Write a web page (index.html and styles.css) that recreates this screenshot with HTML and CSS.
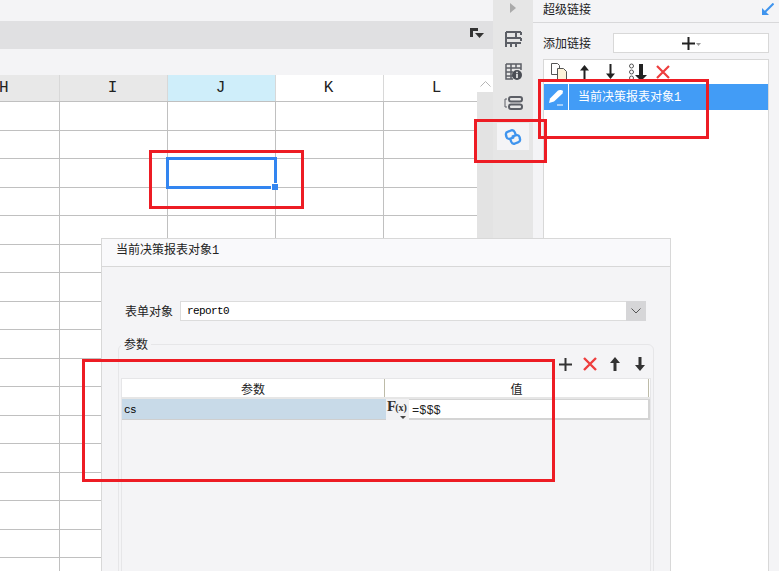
FILE: index.html
```html
<!DOCTYPE html>
<html lang="zh">
<head>
<meta charset="utf-8">
<title>超级链接</title>
<link rel="stylesheet" href="styles.css">
</head>
<body>
<div class="app">
  <div class="main">
    <div class="strip"></div>
    <div class="toolbar">
      <svg class="tb-icon" width="14" height="12" viewBox="0 0 14 12"><path d="M0 0h8v3H3v6H0z" fill="#333"/><path d="M5 5h9l-4.500 5z" fill="#333"/></svg>
    </div>
    <div class="strip2"></div>
    <div class="sheet">
      <div class="grid-wrap">
        <div class="head">
          <div class="hc hc-h"><span class="hl">H</span></div>
          <div class="hc hc-g">I</div>
          <div class="hc hc-sel">J</div>
          <div class="hc">K</div>
          <div class="hc">L</div>
        </div>
        <div class="rows" id="rows"></div>
      </div>
      <div class="vbar"><div class="vbtn"><svg width="11" height="6" viewBox="0 0 11 6"><path d="M.5 5.500l5-5 5 5" fill="none" stroke="#b5b5b5"/></svg></div></div>
    </div>
  </div>
  <div class="rail">
    <svg class="rail-tri" width="6" height="10" viewBox="0 0 6 10"><path d="M0 0l6 5-6 5z" fill="#aaa"/></svg>
    <svg class="ri ri1" width="17" height="17" viewBox="0 0 17 17"><path d="M1 1h15M1 1v15M1 7h15M1 12h15M16 1v3M16 7v3M6 12v4M11 12v4M11 1v6" fill="none" stroke="#5c5f66" stroke-width="2"/></svg>
    <svg class="ri ri2" width="17" height="17" viewBox="0 0 17 17"><path d="M1 1h15v6M1 1v15h7M1 5h15M1 9h7M1 13h7M6 1v15M11 1v4" fill="none" stroke="#5c5f66" stroke-width="1.500"/><circle cx="12" cy="12" r="5" fill="#4b4e55"/><path d="M12 8.800v1.400M12 11v4" stroke="#fff" stroke-width="1.500"/></svg>
    <svg class="ri ri3" width="19" height="14" viewBox="0 0 19 14"><path d="M3 3H1v8h2" fill="none" stroke="#5c5f66"/><rect x="5" y="1" width="13" height="4.500" rx="2" fill="none" stroke="#5c5f66" stroke-width="2"/><rect x="5" y="8.500" width="13" height="4.500" rx="2" fill="none" stroke="#5c5f66" stroke-width="2"/></svg>
    <div class="rail-on">
      <svg width="18" height="18" viewBox="0 0 18 18"><g fill="none" stroke="#3f94ee" stroke-width="2.300" stroke-linecap="round" transform="rotate(15 9 9)"><path d="M9.500 9.500 6.200 11.600a2.800 2.800 0 0 1-3.600-1L1.900 9.200"/><path d="M1.900 9.200a3 3 0 0 1 .9-4.100L5.400 3.200a3 3 0 0 1 4 .7l1.200 1.600"/><path d="M8.500 8.500l3.300-2.100a2.800 2.800 0 0 1 3.600 1l.7 1.400"/><path d="M16.100 8.800a3 3 0 0 1-.9 4.100l-2.600 1.900a3 3 0 0 1-4-.7l-1.200-1.600"/></g></svg>
    </div>
  </div>
  <div class="panel">
    <div class="p-title">
      <span>超级链接</span>
      <svg width="12" height="12" viewBox="0 0 12 12"><path d="M11.500.5 3 9" stroke="#3f94ee" stroke-width="2"/><path d="M0 5v7h7z" fill="#3f94ee"/></svg>
    </div>
    <div class="p-add">
      <span class="p-add-l">添加链接</span>
      <div class="p-add-btn">
        <svg width="13" height="13" viewBox="0 0 13 13"><path d="M0 6.500h13M6.500 0v13" stroke="#222" stroke-width="2"/></svg>
        <svg class="caret" width="5" height="3" viewBox="0 0 5 3"><path d="M0 0h5L2.500 3z" fill="#999"/></svg>
      </div>
    </div>
    <div class="p-list">
      <div class="p-tools">
        <svg width="17" height="17" viewBox="0 0 17 17"><path d="M.5.500h6l2 2v9h-8z" fill="#fff" stroke="#555"/><path d="M6.500 5.500h6l3 3v8h-9z" fill="#fdf3d8" stroke="#555"/></svg>
        <svg width="11" height="16" viewBox="0 0 11 16"><path d="M5.500 1 10 6.500H6.500V16h-2V6.500H1z" fill="#222"/></svg>
        <svg width="11" height="16" viewBox="0 0 11 16"><path d="M5.500 15 10 9.500H6.500V0h-2v9.500H1z" fill="#222"/></svg>
        <svg width="18" height="18" viewBox="0 0 18 18"><circle cx="2.500" cy="3" r="2" fill="none" stroke="#555"/><circle cx="2.500" cy="9" r="2" fill="none" stroke="#555"/><circle cx="2.500" cy="15" r="2" fill="none" stroke="#555"/><path d="M12 18l6-6h-4V1h-4v11H6z" fill="#222"/></svg>
        <svg width="14" height="14" viewBox="0 0 14 14"><path d="M1 1l12 12M13 1 1 13" stroke="#ee3e3e" stroke-width="2.200"/></svg>
      </div>
      <div class="p-item">
        <div class="p-pen"><svg width="17" height="17" viewBox="0 0 17 17"><path d="M1 14l1-4.500L10 1.500c1.500-1 4-.5 5 .5l-.5 2.500L6 12.500z" fill="#fff"/><path d="M9 16h6" stroke="#fff"/></svg></div>
        <span class="p-name">当前决策报表对象1</span>
      </div>
    </div>
  </div>

  <div class="selection"><i class="sel-handle"></i></div>

  <div class="dialog">
    <div class="d-title">当前决策报表对象1</div>
    <div class="d-body">
      <div class="d-form">
        <span class="d-label">表单对象</span>
        <div class="d-select">
          <span class="d-val">report0</span>
          <div class="d-arrow"><svg width="10" height="6" viewBox="0 0 10 6"><path d="M.5.500 5 5 9.500.5" fill="none" stroke="#555"/></svg></div>
        </div>
      </div>
      <div class="d-group">
        <span class="d-legend">参数</span>
        <div class="d-tools">
          <svg width="13" height="13" viewBox="0 0 13 13"><path d="M0 6.500h13M6.500 0v13" stroke="#333" stroke-width="2"/></svg>
          <svg width="14" height="14" viewBox="0 0 14 14"><path d="M1 1l12 12M13 1 1 13" stroke="#ee3e3e" stroke-width="2.400"/></svg>
          <svg width="10" height="14" viewBox="0 0 10 14"><path d="M5 0l5 6H6.500v8h-3V6H0z" fill="#333"/></svg>
          <svg width="10" height="14" viewBox="0 0 10 14"><path d="M5 14l5-6H6.500V0h-3v8H0z" fill="#333"/></svg>
        </div>
        <div class="d-table">
          <div class="t-head">
            <div class="th th-a"><span class="th-t">参数</span></div>
            <div class="th th-b"><span class="th-t">值</span></div>
          </div>
          <div class="t-row">
            <div class="td-name">cs</div>
            <div class="td-fx"><span class="fx-f">F</span><span class="fx-x">(x)</span><svg class="fx-c" width="6" height="3" viewBox="0 0 6 3"><path d="M0 0h6L3 3z" fill="#444"/></svg></div>
            <div class="td-val">=$$$</div>
          </div>
        </div>
      </div>
    </div>
  </div>

  <div class="mark m1"></div>
  <div class="mark m2"></div>
  <div class="mark m3"></div>
  <div class="mark m4"></div>
</div>
<script src="app.js"></script>
</body>
</html>
```
FILE: app.js
```js
var rows = document.getElementById('rows');
var html = '';
for (var r = 0; r < 17; r++) {
  html += '<div class="row"><div class="c c-h"></div><div class="c"></div><div class="c"></div><div class="c"></div><div class="c"></div></div>';
}
rows.innerHTML = html;
```
FILE: styles.css
```css
* { box-sizing: border-box; }
html, body { margin: 0; padding: 0; height: 100%; overflow: hidden; }
body { background: #f4f4f6; font-family: "Noto Sans CJK SC", "Liberation Sans", sans-serif; font-size: 12px; color: #222; }
.app { position: relative; display: flex; width: 779px; height: 571px; overflow: hidden; }

.main { width: 493px; flex: none; display: flex; flex-direction: column; }
.strip { height: 21px; }
.toolbar { height: 28px; background: #e0e0e2; display: flex; align-items: center; justify-content: flex-end; padding-right: 9px; }
.tb-icon { margin-top: -3px; }
.strip2 { height: 26px; }
.sheet { flex: 1; display: flex; min-height: 0; }
.grid-wrap { width: 477px; overflow: hidden; background: #fff; }
.head { display: flex; height: 27px; width: 500px; border-bottom: 1px solid #c0c0c0; font-family: "Liberation Mono", monospace; font-size: 16px; color: #222; }
.hc { width: 108px; display: flex; align-items: center; justify-content: center; border-right: 1px solid #d8d8d8; flex: none; padding: 0 2px 1px 0; }
.hc-h { width: 60px; background: #e8e8e8; justify-content: flex-start; }
.hl { margin-left: -1px; }
.hc-g { background: #e8e8e8; }
.hc-sel { background: #cfeefa; }
.rows { width: 500px; }
.row { display: flex; height: 28.5px; border-bottom: 1px solid #c0c0c0; }
.c { width: 108px; flex: none; border-right: 1px solid #c0c0c0; }
.c-h { width: 60px; }
.vbar { width: 16px; background: #e3e3e3; }
.vbtn { height: 17px; background: #fff; display: flex; align-items: center; justify-content: center; }

.rail { width: 40px; flex: none; background: #e6e6e6; display: flex; flex-direction: column; align-items: center; position: relative; }
.rail-tri { margin-top: 3px; }
.ri { display: block; }
.ri1 { margin-top: 18px; }
.ri2 { margin-top: 15px; }
.ri3 { margin-top: 16px; }
.rail-on { margin-top: 13px; width: 32px; height: 27px; background: #f4f4f6; display: flex; align-items: center; justify-content: center; }

.panel { flex: 1; min-width: 0; padding: 0 10px 0 10px; }
.p-title { height: 23px; margin: 0 -10px; padding: 0 5px 5px 10px; border-bottom: 1px solid #d8d8da; display: flex; align-items: center; justify-content: space-between; line-height: 18px; }
.p-add { display: flex; align-items: center; margin-top: 10px; height: 20px; }
.p-add-l { width: 70px; padding-bottom: 2px; }
.p-add-btn { flex: 1; height: 20px; background: #fff; border: 1px solid #d8d8d8; display: flex; align-items: center; justify-content: center; gap: 1px; }
.caret { margin-top: 2px; }
.p-list { margin-top: 6px; height: 530px; background: #fff; border: 1px solid #d8d8d8; }
.p-tools { height: 24px; display: flex; align-items: center; padding: 0 0 1px 7px; }
.p-tools svg:nth-child(2) { margin-left: 11px; }
.p-tools svg:nth-child(3) { margin-left: 15px; }
.p-tools svg:nth-child(4) { margin-left: 13px; }
.p-tools svg:nth-child(5) { margin-left: 9px; }
.p-item { height: 26px; background: #429cf6; display: flex; align-items: center; color: #fff; }
.p-pen { width: 25px; height: 26px; border-right: 1px solid #fff; display: flex; align-items: center; justify-content: center; }
.p-name { margin-left: 9px; padding-bottom: 3px; font-family: "Liberation Mono", "Noto Sans CJK SC", monospace; }

.selection { position: absolute; left: 166px; top: 157px; width: 111px; height: 32px; border: 3px solid #3385f0; }
.sel-handle { position: absolute; right: -4px; bottom: -4px; width: 7px; height: 7px; background: #3385f0; border: 1px solid #fff; border-width: 1px 0 0 1px; }

.dialog { position: absolute; left: 101px; top: 238px; width: 570px; height: 340px; background: #f4f4f6; border: 1px solid #d8d8d8; }
.d-title { height: 28px; background: #f9f9fb; border-bottom: 1px solid #d8d8d8; padding-left: 14px; line-height: 25px; font-family: "Liberation Mono", "Noto Sans CJK SC", monospace; }
.d-body { padding: 34px 24px 0 16px; }
.d-form { display: flex; align-items: center; height: 20px; padding-left: 7px; }
.d-label { width: 55px; flex: none; padding-bottom: 2px; }
.d-select { flex: 1; height: 20px; background: #fff; border: 1px solid #dcdcdc; display: flex; align-items: center; justify-content: space-between; }
.d-val { font-family: "Liberation Mono", monospace; font-size: 11px; letter-spacing: -.6px; color: #000; margin-left: 6px; }
.d-arrow { width: 20px; height: 20px; margin: -1px -1px -1px 0; background: #d6d6d8; display: flex; align-items: center; justify-content: center; }
.d-group { position: relative; margin: 23px -8px 0 0; height: 300px; border: 1px solid #e6e6e8; border-radius: 6px; padding: 8px 2px 0 2px; }
.d-legend { position: absolute; left: 2px; top: -9px; padding: 0 3px; background: #f4f4f6; line-height: 16px; }
.d-tools { height: 22px; display: flex; align-items: center; justify-content: flex-end; padding-right: 6px; }
.d-tools svg:nth-child(2) { margin-left: 11px; }
.d-tools svg:nth-child(3) { margin-left: 13px; }
.d-tools svg:nth-child(4) { margin-left: 15px; }
.d-table { height: 250px; border: 1px solid #e6e6e8; width: 530px; margin-top: 3px; }
.t-head { display: flex; height: 20px; background: #fff; border-bottom: 2px solid #e6e6e6; }
.th { display: flex; align-items: center; justify-content: center; line-height: 18px; height: 18px; }
.th-t { padding-top: 2px; }
.th-a { width: 263px; border-right: 1px solid #bdbba8; }
.th-b { width: 264px; border-right: 1px solid #bdbba8; }
.t-row { display: flex; height: 21px; }
.td-name { width: 264px; background: #c8dae8; border-bottom: 1px solid #cfcfcf; font-family: "Liberation Mono", monospace; font-size: 11px; letter-spacing: -.6px; color: #000; line-height: 22px; padding-left: 2px; }
.td-fx { position: relative; width: 23px; background: #f1f1f3; font-family: "Liberation Serif", serif; color: #333; line-height: 15px; white-space: nowrap; }
.fx-f { font-size: 15px; font-weight: bold; margin-left: 1px; }
.fx-x { font-size: 10px; margin-left: -1px; font-weight: bold; }
.fx-c { position: absolute; right: 3px; bottom: 1px; }
.td-val { flex: 1; background: #fff; border: 1px solid #d4d4d4; border-bottom-width: 2px; border-right-width: 2px; border-left: 0; padding-left: 3px; font-family: "Liberation Mono", monospace; font-size: 12px; line-height: 22px; }

.mark { position: absolute; border: 3px solid #ed1c24; pointer-events: none; }
.m1 { left: 149px; top: 150px; width: 155px; height: 59px; }
.m2 { left: 538px; top: 79px; width: 171px; height: 60px; }
.m3 { left: 474px; top: 119px; width: 73px; height: 44px; }
.m4 { left: 82px; top: 359px; width: 473px; height: 123px; }
```
